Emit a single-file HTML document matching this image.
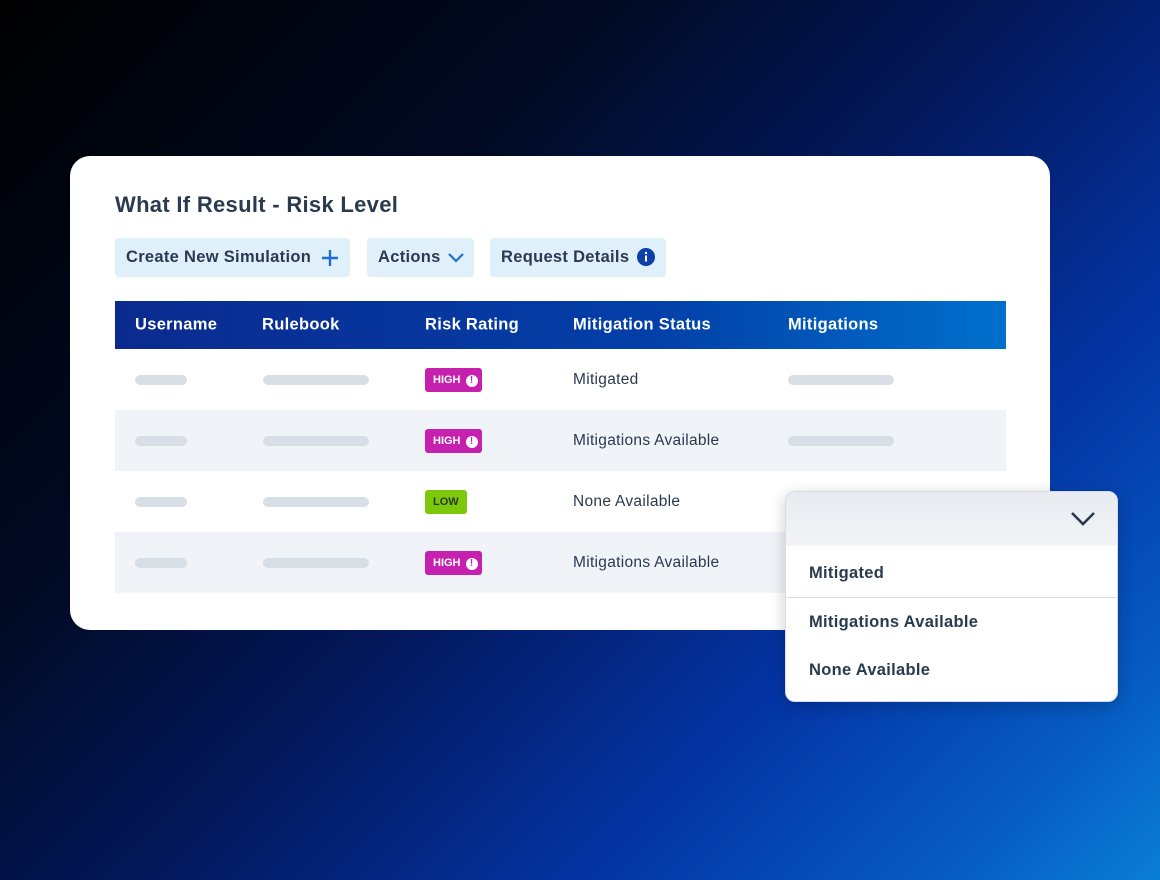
<!DOCTYPE html>
<html><head><style>
*{margin:0;padding:0;box-sizing:border-box}
body{width:1160px;height:880px;overflow:hidden;font-family:"Liberation Sans",sans-serif;position:relative;
background:linear-gradient(135deg,#000 0%,#010a22 30%,#03175a 50%,#0434a4 72%,#0658c0 88%,#0a7ed6 100%);}
.card{position:absolute;left:70px;top:156px;width:980px;height:474px;background:#fff;border-radius:20px}
h1{position:absolute;left:45px;top:36px;font-size:22px;font-weight:bold;color:#2a3a4f;letter-spacing:.3px}
.btn{position:absolute;top:82px;height:39px;background:#dff0fa;border-radius:4px;font-size:16.5px;font-weight:bold;color:#2a3a4f;line-height:39px;padding-left:11px;letter-spacing:.3px}
.tbl{position:absolute;left:45px;top:145px;width:891px}
.hd{height:48px;background:linear-gradient(90deg,#0a2a8f,#033fa8 60%,#0070cc);color:#fff;font-size:16.5px;font-weight:bold;position:relative;letter-spacing:.3px}
.hd span,.row span{position:absolute;top:50%;transform:translateY(-50%)}
.row{height:61px;position:relative;font-size:15.5px;color:#2a3a4f;letter-spacing:.3px}
.row.alt{background:#f0f3f7}
.bar{height:10px;border-radius:5px;background:#d8dee6}
.tag{height:24px;border-radius:3px;color:#fff;font-size:11px;font-weight:bold;line-height:24px;padding-left:8px;letter-spacing:0}
.high{background:#c621ae;width:57px}
.low{background:#7cc90c;width:42px;color:#2a3a1f}
.ex{display:inline-block;font-style:normal;width:12px;height:12px;border-radius:50%;background:#fff;color:#c621ae;font-size:10px;line-height:12px;text-align:center;margin-left:5px;vertical-align:0}
.dd{position:absolute;left:785px;top:491px;width:333px;height:211px;background:#fff;border-radius:10px;border:1px solid #d6dde6;overflow:hidden;box-shadow:0 4px 16px rgba(0,0,0,.2)}
.ddh{height:54px;background:linear-gradient(180deg,#e7ebf0,#f2f4f7)}
.it{position:absolute;left:23px;font-size:16.5px;font-weight:bold;color:#2a3a4f;letter-spacing:.3px}
</style></head><body>
<div class="card">
<h1>What If Result - Risk Level</h1>
<div class="btn" style="left:45px;width:235px">Create New Simulation <svg width="20" height="20" viewBox="0 0 20 20" style="position:absolute;left:205px;top:10px"><path d="M10 2v16M2 10h16" stroke="#1f6fd0" stroke-width="2.4"/></svg></div>
<div class="btn" style="left:297px;width:107px">Actions <svg width="18" height="12" viewBox="0 0 18 12" style="position:absolute;left:80px;top:14px"><path d="M2 2l7 7 7-7" stroke="#1f6fd0" stroke-width="2.2" fill="none"/></svg></div>
<div class="btn" style="left:420px;width:176px">Request Details <svg width="18" height="18" viewBox="0 0 18 18" style="position:absolute;left:147px;top:10px"><circle cx="9" cy="9" r="9" fill="#0d3fa8"/><rect x="8" y="7.5" width="2" height="6" fill="#fff"/><circle cx="9" cy="5" r="1.2" fill="#fff"/></svg></div>
<div class="tbl">
<div class="hd"><span style="left:20px">Username</span><span style="left:147px">Rulebook</span><span style="left:310px">Risk Rating</span><span style="left:458px">Mitigation Status</span><span style="left:673px">Mitigations</span></div>
<div class="row"><span class="bar" style="left:20px;width:52px"></span><span class="bar" style="left:148px;width:106px"></span><span class="tag high" style="left:310px">HIGH<i class="ex">!</i></span><span style="left:458px">Mitigated</span><span class="bar" style="left:673px;width:106px"></span></div>
<div class="row alt"><span class="bar" style="left:20px;width:52px"></span><span class="bar" style="left:148px;width:106px"></span><span class="tag high" style="left:310px">HIGH<i class="ex">!</i></span><span style="left:458px">Mitigations Available</span><span class="bar" style="left:673px;width:106px"></span></div>
<div class="row"><span class="bar" style="left:20px;width:52px"></span><span class="bar" style="left:148px;width:106px"></span><span class="tag low" style="left:310px">LOW</span><span style="left:458px">None Available</span></div>
<div class="row alt"><span class="bar" style="left:20px;width:52px"></span><span class="bar" style="left:148px;width:106px"></span><span class="tag high" style="left:310px">HIGH<i class="ex">!</i></span><span style="left:458px">Mitigations Available</span></div>
</div>
</div>
<div class="dd">
<div class="ddh"><svg width="26" height="16" viewBox="0 0 26 16" style="position:absolute;left:284px;top:19px"><path d="M2 2l11 11 11-11" stroke="#2a3a4f" stroke-width="2.6" fill="none"/></svg></div>
<div class="it" style="top:72px">Mitigated</div>
<div style="position:absolute;left:0;right:0;top:105px;height:1px;background:#d6dde6"></div>
<div class="it" style="top:121px">Mitigations Available</div>
<div class="it" style="top:169px">None Available</div>
</div>
</body></html>
